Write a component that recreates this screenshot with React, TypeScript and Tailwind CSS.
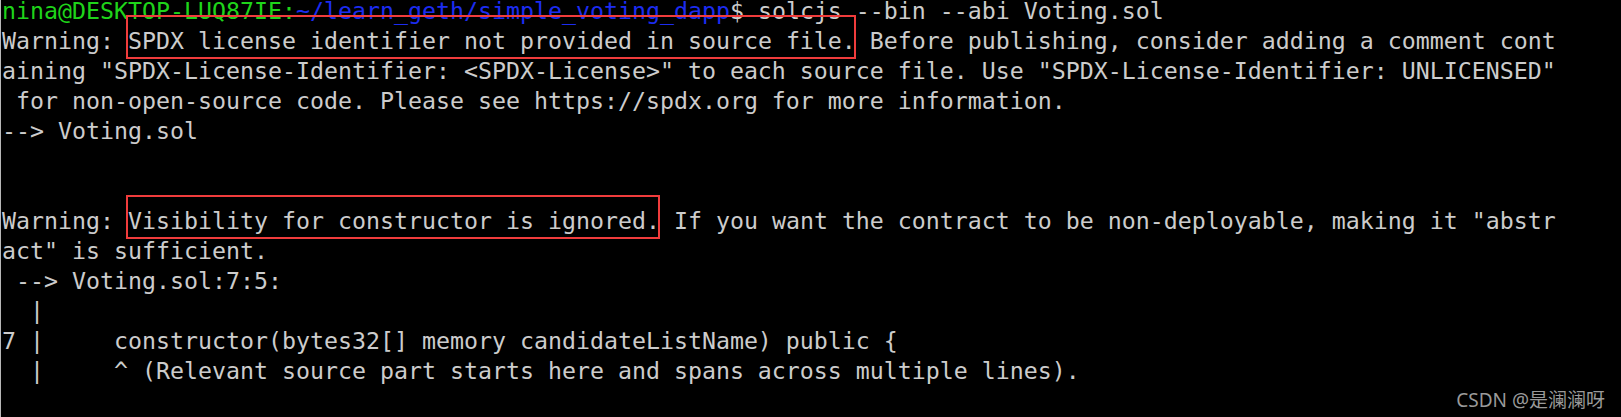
import React from "react";

const Box = ({ children }: { children: React.ReactNode }) => (
  <span className="relative inline-block">
    {children}
    <span className="pointer-events-none absolute -left-[2px] right-0 -top-[11px] -bottom-[3px] border-2 border-[#f03c3c]" />
  </span>
);

export default function App() {
  return (
    <div className="relative h-[417px] w-[1621px] overflow-hidden bg-black">
      <div className="absolute left-0 top-0 h-full w-px bg-[#b8b8b8]" />
      <div
        className="-mt-[4px] pl-[2px] text-[23.25px] leading-[30px] text-[#cccccc] whitespace-pre"
        style={{ fontFamily: '"DejaVu Sans Mono", "Liberation Mono", monospace' }}
      >
        <div>
          <span className="text-[#1fd41a]">nina@DESKTOP-LUQ87IE:</span>
          <span className="text-[#1c2cf0]">~/learn_geth/simple_voting_dapp</span>
          <span>$ solcjs --bin --abi Voting.sol</span>
        </div>
        <div>
          {"Warning: "}
          <Box>SPDX license identifier not provided in source file.</Box>
          {" Before publishing, consider adding a comment cont"}
        </div>
        <div>{'aining "SPDX-License-Identifier: <SPDX-License>" to each source file. Use "SPDX-License-Identifier: UNLICENSED"'}</div>
        <div>{" for non-open-source code. Please see https://spdx.org for more information."}</div>
        <div>{"--> Voting.sol"}</div>
        <div>{" "}</div>
        <div>{" "}</div>
        <div>
          {"Warning: "}
          <Box>Visibility for constructor is ignored.</Box>
          {' If you want the contract to be non-deployable, making it "abstr'}
        </div>
        <div>{'act" is sufficient.'}</div>
        <div>{" --> Voting.sol:7:5:"}</div>
        <div>{"  |"}</div>
        <div>{"7 |     constructor(bytes32[] memory candidateListName) public {"}</div>
        <div>{"  |     ^ (Relevant source part starts here and spans across multiple lines)."}</div>
        <div>{" "}</div>
      </div>
      <div
        className="absolute bottom-[7px] right-[16px] text-[19px] leading-none text-[#9a9a9a]"
        style={{ fontFamily: '"Noto Sans", "Noto Sans CJK SC", sans-serif' }}
      >
        CSDN @是澜澜呀
      </div>
    </div>
  );
}
